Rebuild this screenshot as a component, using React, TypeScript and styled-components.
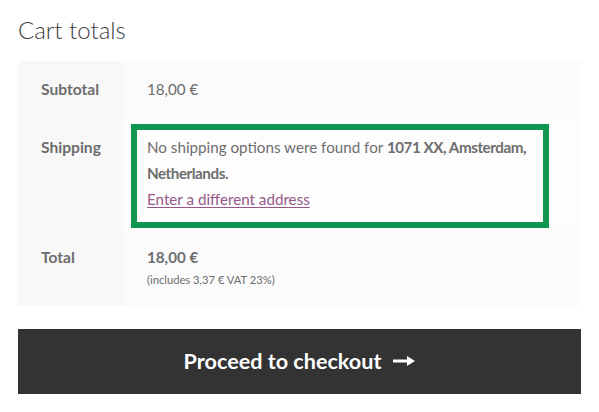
import React from "react";
import styled, { createGlobalStyle } from "styled-components";

const Global = createGlobalStyle`
  html, body { margin: 0; padding: 0; background: #ffffff; }
  body { font-family: Lato, "Liberation Sans", sans-serif; color: #6d6d6d; }
`;

const Page = styled.div`
  padding: 12px 18px 0 18px;
`;

const Heading = styled.h2`
  margin: 0 0 13px 0;
  font-size: 24px;
  line-height: 36px;
  font-weight: 300;
  color: #3d3d3d;
`;

const Table = styled.table`
  width: 100%;
  table-layout: fixed;
  border-collapse: collapse;
  border-spacing: 0;
  font-size: 15.2px;
  line-height: 26px;
`;

const Row = styled.tr<{ $shade: string }>`
  & > td { background: ${(p) => p.$shade}; }
`;

const Label = styled.th`
  width: 60px;
  padding: 15px 23px 17px 23px;
  background: #f8f8f8;
  text-align: left;
  vertical-align: top;
  font-size: 15.6px;
  font-weight: 700;
  color: #6d6d6d;
`;

const Cell = styled.td<{ $boxed?: boolean }>`
  padding: ${(p) => (p.$boxed ? "5px 32px 1px 7px" : "15px 23px 17px 23px")};
  vertical-align: top;
  color: #6d6d6d;
`;

const Highlight = styled.div`
  border: 6px solid #0f9550;
  padding: 4px 0 10px 10px;
`;

const Strong = styled.strong<{ $tight?: boolean }>`
  font-weight: 700;
  letter-spacing: ${(p) => (p.$tight ? "-0.45px" : "0")};
`;

const AddressLink = styled.a`
  color: #96588a;
  text-decoration: underline;
  text-underline-offset: 2px;
`;

const Small = styled.small`
  display: block;
  font-size: 11.2px;
  line-height: 19px;
`;

const CheckoutButton = styled.a`
  display: flex;
  align-items: center;
  justify-content: center;
  gap: 12px;
  margin-top: 23px;
  height: 65px;
  padding-bottom: 2px;
  box-sizing: border-box;
  background: #333333;
  color: #ffffff;
  font-size: 21.6px;
  font-weight: 700;
  text-decoration: none;
`;

const Arrow = () => (
  <svg width="22" height="10" viewBox="0 0 22 10" aria-hidden="true">
    <path d="M0 3.5 H14 V0 L22 5 L14 10 V6.5 H0 Z" fill="#ffffff" />
  </svg>
);

export default function App() {
  return (
    <>
      <Global />
      <Page>
        <Heading>Cart totals</Heading>
        <Table>
          <tbody>
            <Row $shade="#fbfbfb">
              <Label>Subtotal</Label>
              <Cell>18,00 €</Cell>
            </Row>
            <Row $shade="#fdfdfd">
              <Label>Shipping</Label>
              <Cell $boxed>
                <Highlight>
                  No shipping options were found for{" "}
                  <Strong $tight>1071 XX, Amsterdam, Netherlands.</Strong>
                  <br />
                  <AddressLink href="#">Enter a different address</AddressLink>
                </Highlight>
              </Cell>
            </Row>
            <Row $shade="#fbfbfb">
              <Label>Total</Label>
              <Cell>
                <Strong>18,00 €</Strong>
                <Small>(includes 3,37 € VAT 23%)</Small>
              </Cell>
            </Row>
          </tbody>
        </Table>
        <CheckoutButton href="#">
          Proceed to checkout <Arrow />
        </CheckoutButton>
      </Page>
    </>
  );
}
